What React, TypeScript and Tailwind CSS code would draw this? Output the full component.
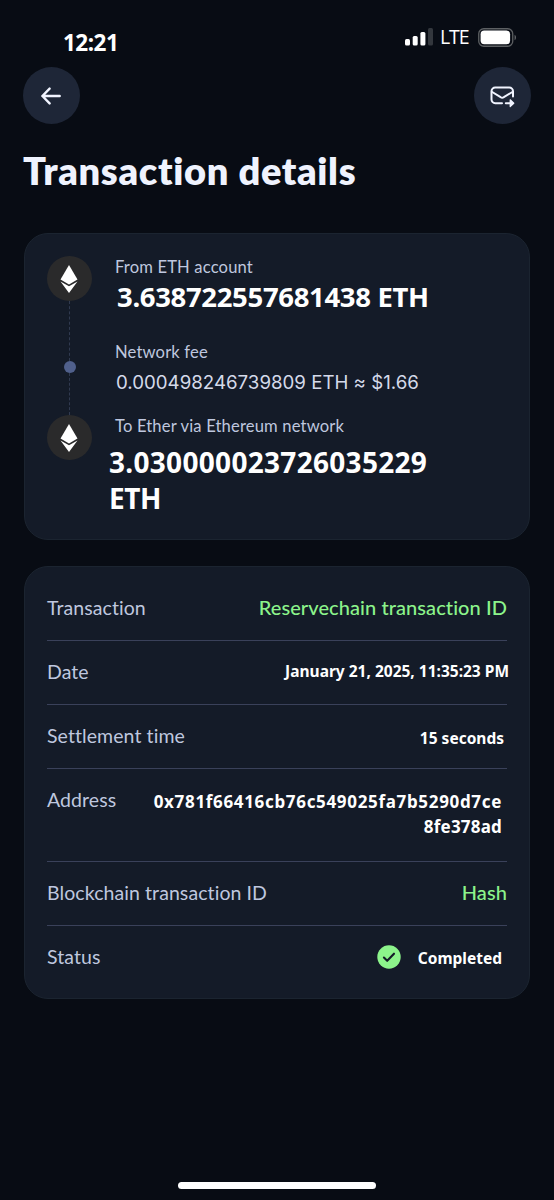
import type { ReactNode } from 'react';

const EthIcon = () => {
	return (
		<div className="flex size-[45px] items-center justify-center rounded-full bg-[#2a2a2b]">
			<svg className="mr-px" width="18" height="28" viewBox="0 0 18 28" fill="#fff">
				<path d="M9 0 17.5 14.6 9 19.4.5 14.6Z" />
				<path d="M.5 16.4 9 21.2l8.5-4.8L9 28Z" />
			</svg>
		</div>
	);
};

const StatusBar = () => {
	return (
		<div className="flex h-[67px] items-start justify-between pl-10 pr-[14px]">
			<span className="mt-[31px] font-['Noto_Sans',sans-serif] text-[22.5px] font-bold leading-6 tracking-[-0.5px] text-white">
				12:21
			</span>
			<div className="mt-[27px] flex h-5 items-center">
				<svg width="28" height="18" viewBox="0 0 28 18" fill="#fff">
					<rect x="0" y="11" width="5" height="6.5" rx="1.5" />
					<rect x="7.7" y="8" width="5" height="9.5" rx="1.5" />
					<rect x="15.4" y="4" width="5" height="13.5" rx="1.5" />
					<rect x="23" y="0" width="5" height="17.5" rx="1.5" fill="#33373d" />
				</svg>
				<span className="ml-[7px] w-[30px] font-['Open_Sans',sans-serif] text-[19.5px] font-medium leading-5 tracking-[-1.1px] text-white">
					LTE
				</span>
				<svg className="ml-2" width="39" height="19" viewBox="0 0 39 19">
					<rect x=".75" y=".75" width="34" height="17.5" rx="5" fill="none" stroke="#5d6063" strokeWidth="1.3" />
					<rect x="2.6" y="2.6" width="29.5" height="13.6" rx="3.6" fill="#fff" />
					<path d="M36.6 6.8c1.7.6 1.7 4.8 0 5.4Z" fill="#6d7073" />
				</svg>
			</div>
		</div>
	);
};

const RoundButton = ({ label, children }: { label: string; children: ReactNode }) => {
	return (
		<button aria-label={label} className="flex size-[57px] items-center justify-center rounded-full bg-[#1e2637]">
			{children}
		</button>
	);
};

const Row = ({ label, last, children }: { label: string; last?: boolean; children: ReactNode }) => {
	return (
		<div className={`flex items-start justify-between pt-[19px] pb-5 ${last ? '' : 'border-b border-[#3a415a]'}`}>
			<span className="text-[19.5px] leading-6 tracking-[0.08px] text-[#bfc7df]">{label}</span>
			{children}
		</div>
	);
};

const App = () => {
	return (
		<div className="flex h-[1200px] w-[554px] flex-col bg-[#080c14] px-[23px] font-['Lato',sans-serif] whitespace-nowrap [font-variant-ligatures:none]">
			<StatusBar />
			<div className="flex justify-between">
				<RoundButton label="Back">
					<svg className="mr-0.5" width="20" height="18" viewBox="0 0 20 18" fill="none" stroke="#f1f4ff" strokeWidth="2.4" strokeLinecap="round" strokeLinejoin="round">
						<path d="M18.7 9H1.4M8.6 1.6 1.4 9l7.2 7.4" />
					</svg>
				</RoundButton>
				<RoundButton label="Share by mail">
					<svg className="mt-0.5" width="25" height="22" viewBox="0 0 25 22" fill="none" stroke="#f1f4ff" strokeWidth="2" strokeLinecap="round" strokeLinejoin="round">
						<path d="M12 17.2H5.2a3.7 3.7 0 0 1-3.7-3.7V5.2a3.7 3.7 0 0 1 3.7-3.7h14.1A3.7 3.7 0 0 1 23 5.2v5.4" />
						<path d="m2.2 6 8.4 5.2c1 .7 2.2.7 3.2 0L22.4 6" />
						<path d="M15.8 17.2h6.4" />
						<path d="m20.2 13.8 3.6 3.4-3.6 3.4Z" fill="#f1f4ff" strokeWidth="1.2" />
					</svg>
				</RoundButton>
			</div>
			<h1 className="mt-6 text-[38px] font-extrabold leading-[44px] tracking-[0.65px] text-[#eff3fe]">Transaction details</h1>

			<section className="mt-[41px] ml-px flex h-[307px] w-[506px] rounded-[24px] border border-[#1b2430] bg-[#141b28] pl-[22px] pt-[22px]">
				<div className="flex flex-col items-center">
					<EthIcon />
					<div className="h-[60px] border-l border-dashed border-[#303a50]" />
					<div className="size-3 rounded-full bg-[#50608c]" />
					<div className="h-[42px] border-l border-dashed border-[#303a50]" />
					<EthIcon />
				</div>
				<div className="ml-[23px] flex flex-col pt-px text-[16.6px] leading-5 tracking-[0.15px] text-[#bfc7df]">
					<span>From ETH account</span>
					<span className="mt-0.5 pl-0.5 font-['Noto_Sans',sans-serif] text-[27.5px] font-bold leading-9 tracking-[-0.34px] text-white">
						3.638722557681438 ETH
					</span>
					<span className="mt-[27px]">Network fee</span>
					<span className="mt-[9px] pl-px font-['Inter',sans-serif] text-[18.7px] leading-6 tracking-normal text-[#d5daea]">
						0.000498246739809 ETH ≈ $1.66
					</span>
					<span className="mt-[21px]">To Ether via Ethereum network</span>
					<span className="mt-2 -ml-1.5 font-['Noto_Sans',sans-serif] text-[28px] font-bold leading-9 tracking-[0.3px] text-white">
						3.030000023726035229
						<br />
						<span className="tracking-[-0.4px]">ETH</span>
					</span>
				</div>
			</section>

			<section className="mt-[26px] ml-px h-[433px] w-[506px] rounded-[24px] border border-[#1b2430] bg-[#141b28] px-[22px] pt-2.5">
				<Row label="Transaction">
					<span className="-mt-px mb-px text-[20px] font-medium leading-6 tracking-[0.08px] text-[#8cf48b]">Reservechain transaction ID</span>
				</Row>
				<Row label="Date">
					<span className="-mt-px -mr-0.5 mb-px font-['Noto_Sans',sans-serif] text-[15.5px] font-bold leading-6 text-white">
						January 21, 2025, 11:35:23 PM
					</span>
				</Row>
				<Row label="Settlement time">
					<span className="mt-0.5 mr-[3px] -mb-0.5 font-['Noto_Sans',sans-serif] text-[15.5px] font-bold leading-6 text-white">
						15 seconds
					</span>
				</Row>
				<Row label="Address">
					<span className="mt-0.5 mr-[5px] mb-0.5 text-right font-['Noto_Sans',sans-serif] text-[17px] font-bold leading-[24.5px] tracking-[0.67px] text-white">
						0x781f66416cb76c549025fa7b5290d7ce
						<br />
						<span className="tracking-[0.2px]">8fe378ad</span>
					</span>
				</Row>
				<Row label="Blockchain transaction ID">
					<span className="-mt-px mb-px text-[20px] font-medium leading-6 tracking-[0.1px] text-[#8cf48b]">Hash</span>
				</Row>
				<Row label="Status" last>
					<span className="flex items-center gap-[17px] pr-[5px]">
						<svg width="24" height="24" viewBox="0 0 24 24">
							<circle cx="12" cy="12" r="11.7" fill="#8cf48b" />
							<path d="m6.9 12.6 3.3 3.2 6.8-7.1" fill="none" stroke="#141b28" strokeWidth="2.1" strokeLinecap="round" strokeLinejoin="round" />
						</svg>
						<span className="mt-px -mb-px font-['Noto_Sans',sans-serif] text-[15.5px] font-bold leading-6 text-white">Completed</span>
					</span>
				</Row>
			</section>

			<div className="mt-auto mb-[11px] h-[7px] w-[198px] self-center rounded-full bg-white" />
		</div>
	);
};

export default App;
